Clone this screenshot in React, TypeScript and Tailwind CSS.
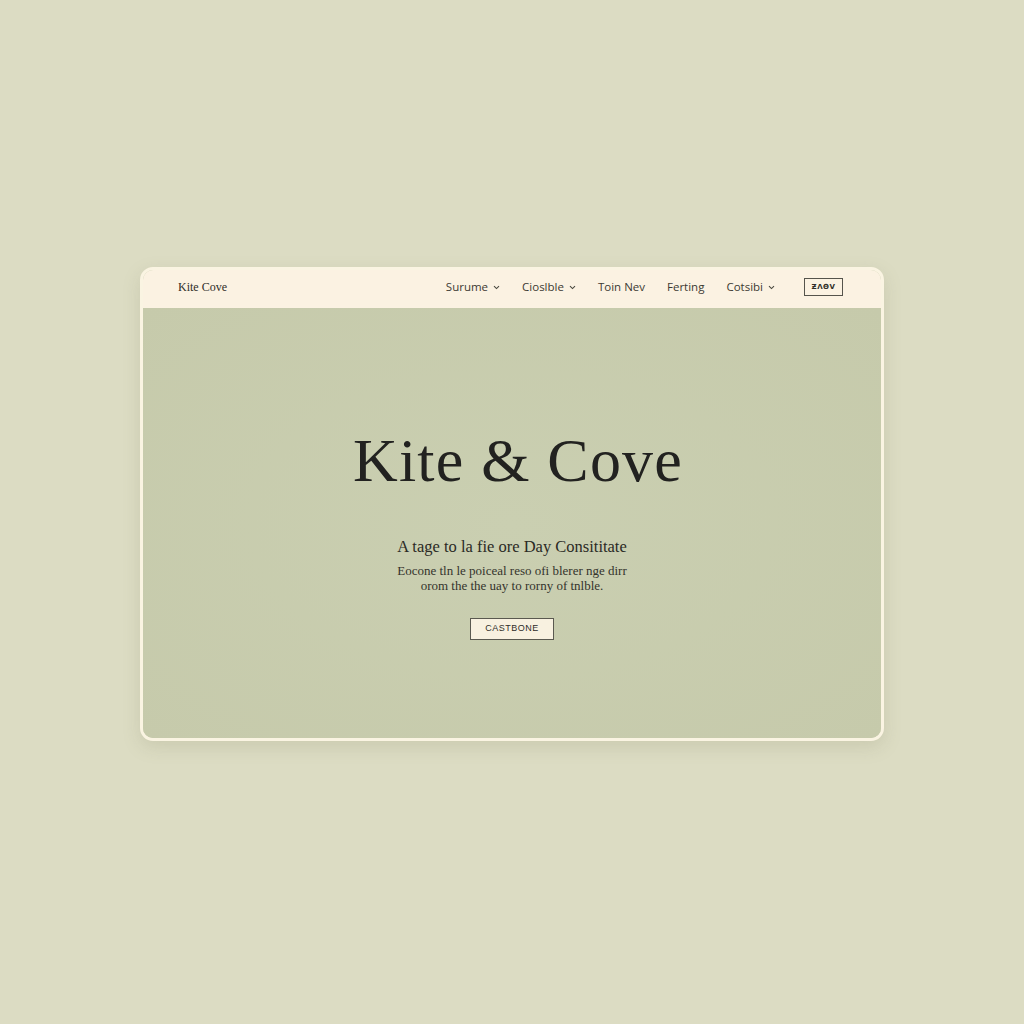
import React from 'react';

const navItems = [
  { label: 'Surume', caret: true },
  { label: 'Cioslble', caret: true },
  { label: 'Toin Nev', caret: false },
  { label: 'Ferting', caret: false },
  { label: 'Cotsibi', caret: true },
];

function Caret() {
  return (
    <svg width="7" height="5" viewBox="0 0 7 5" className="ml-[5px] mt-[1px]">
      <path d="M1 1.2 L3.5 3.6 L6 1.2" fill="none" stroke="#4a4940" strokeWidth="1.1" />
    </svg>
  );
}

export default function App() {
  return (
    <main className="min-h-[1024px] w-full bg-[#dcdcc3] flex flex-col items-center pt-[267px]">
      {/* Site preview card */}
      <div className="w-[744px] h-[474px] rounded-[13px] border-[3px] border-[#faf4e2] bg-[#c8ccae] overflow-hidden flex flex-col shadow-[0_6px_18px_rgba(120,120,90,0.18)]">
        <header className="h-[38px] bg-[#fbf2e2] flex items-center pl-[35px] pr-[38px] pb-[4px] shrink-0">
          <span className="text-[12px] text-[#2e2d28] font-['Liberation_Serif',serif]">Kite Cove</span>
          <nav className="ml-auto flex items-center gap-[22px] font-['Open_Sans',sans-serif] text-[11.5px] text-[#3b3a33]">
            {navItems.map((item) => (
              <span key={item.label} className="flex items-center">
                {item.label}
                {item.caret && <Caret />}
              </span>
            ))}
            <button className="ml-[7px] w-[39px] h-[18px] border border-[#55544c] text-[7px] font-bold tracking-[0.5px] text-[#2e2d28] flex items-center justify-center font-['DejaVu_Sans',sans-serif]">
              ƵΛΘV
            </button>
          </nav>
        </header>

        <section className="flex-1 flex flex-col items-center pt-[121px] bg-[radial-gradient(ellipse_at_center,#cacfb1_0%,#c6caab_100%)]">
          <h1 className="ml-[12px] text-[62px] leading-[62px] tracking-[1.2px] text-[#222220] font-['Liberation_Serif',serif]">
            Kite &amp; Cove
          </h1>
          <h2 className="mt-[46px] text-[16.5px] leading-[20px] text-[#2b2a25] font-['Liberation_Serif',serif]">
            A tage to la fie ore Day Consititate
          </h2>
          <p className="mt-[6px] text-[13px] leading-[15px] text-[#34332c] text-center font-['Liberation_Serif',serif]">
            Eocone tln le poiceal reso ofi blerer nge dirr
            <br />
            orom the the uay to rorny of tnlble.
          </p>
          <button className="mt-[25px] w-[84px] h-[22px] bg-[#f8f1e0] border border-[#5a5950] text-[9px] tracking-[0.5px] text-[#2e2d28] font-['Liberation_Sans',sans-serif]">
            CASTBONE
          </button>
        </section>
      </div>
    </main>
  );
}
